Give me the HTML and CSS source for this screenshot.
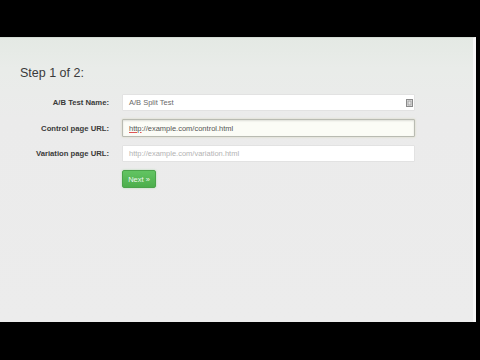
FILE: index.html
```html
<!DOCTYPE html>
<html>
<head>
<meta charset="utf-8">
<link rel="stylesheet" href="styles.css">
</head>
<body>
<div class="screen">
  <h2 class="title">Step 1 of 2:</h2>
  <form class="form">
    <div class="row">
      <label class="label">A/B Test Name:</label>
      <div class="field">
        <span class="value">A/B Split Test</span>
        <svg class="keyicon" width="7" height="8" viewBox="0 0 7 8">
          <rect x="0.5" y="0.5" width="6" height="7" fill="#e4e4e4" stroke="#8a8a8a"/>
          <rect x="2" y="2" width="3" height="4" fill="none" stroke="#9a9a9a" stroke-width="0.8"/>
        </svg>
      </div>
    </div>
    <div class="row">
      <label class="label">Control page URL:</label>
      <div class="field focused">
        <span class="value dark"><span class="spell">http</span>://example.com/control.html</span>
      </div>
    </div>
    <div class="row">
      <label class="label">Variation page URL:</label>
      <div class="field">
        <span class="placeholder">http://example.com/variation.html</span>
      </div>
    </div>
    <div class="row">
      <span class="label"></span>
      <button type="button" class="btn">Next &raquo;</button>
    </div>
  </form>
</div>
</body>
</html>
```
FILE: styles.css
```css
html, body {
  margin: 0;
  padding: 0;
  background: #000;
  width: 480px;
  height: 360px;
  overflow: hidden;
  font-family: "Liberation Sans", Arial, sans-serif;
}
.screen {
  margin-top: 37px;
  width: 476px;
  height: 285px;
  background: linear-gradient(#e4e9e4 0px, #e9ece9 30px, #ebebeb 80px, #ececec 100%);
  border-top: 1px solid #d4dbd4;
  border-right: 3px solid #f6f6f6;
  box-sizing: border-box;
  padding-top: 28px;
}
.title {
  margin: 0 0 13px 20px;
  font-size: 12.5px;
  line-height: 15px;
  font-weight: normal;
  color: #3a3a3a;
}
.form {
  display: flex;
  flex-direction: column;
  gap: 8px;
  margin: 0;
}
.row {
  display: flex;
  align-items: center;
  gap: 13px;
}
.label {
  width: 109px;
  text-align: right;
  font-size: 7.7px;
  font-weight: bold;
  color: #3a3a3a;
}
.field {
  width: 293px;
  height: 17px;
  box-sizing: border-box;
  background: #fff;
  border: 1px solid #e2e2e2;
  border-radius: 1px;
  display: flex;
  align-items: center;
  padding: 0 6px;
  position: relative;
  font-size: 7.5px;
}
.field.focused {
  height: 18px;
  background: #fbfcf6;
  border: 1px solid #b9bbb2;
  box-shadow: inset 0 1px 2px rgba(0,0,0,0.12), 0 0 2px rgba(200,200,150,0.6);
}
.value { color: #6a6a6a; }
.value.dark { color: #555; }
.spell {
  text-decoration: underline #d55;
  text-decoration-thickness: 0.7px;
  text-underline-offset: 1px;
}
.placeholder { color: #b3b3b3; }
.keyicon {
  position: absolute;
  right: 1px;
  top: 4px;
}
.btn {
  width: 34px;
  height: 18px;
  padding: 0;
  border: 1px solid #4aa34a;
  border-radius: 2px;
  background: linear-gradient(#62c462, #4cae4c);
  color: #eef8ee;
  font-family: "Liberation Sans", Arial, sans-serif;
  font-size: 7.5px;
  box-shadow: 0 0 2px rgba(100,200,100,0.5);
}
```
